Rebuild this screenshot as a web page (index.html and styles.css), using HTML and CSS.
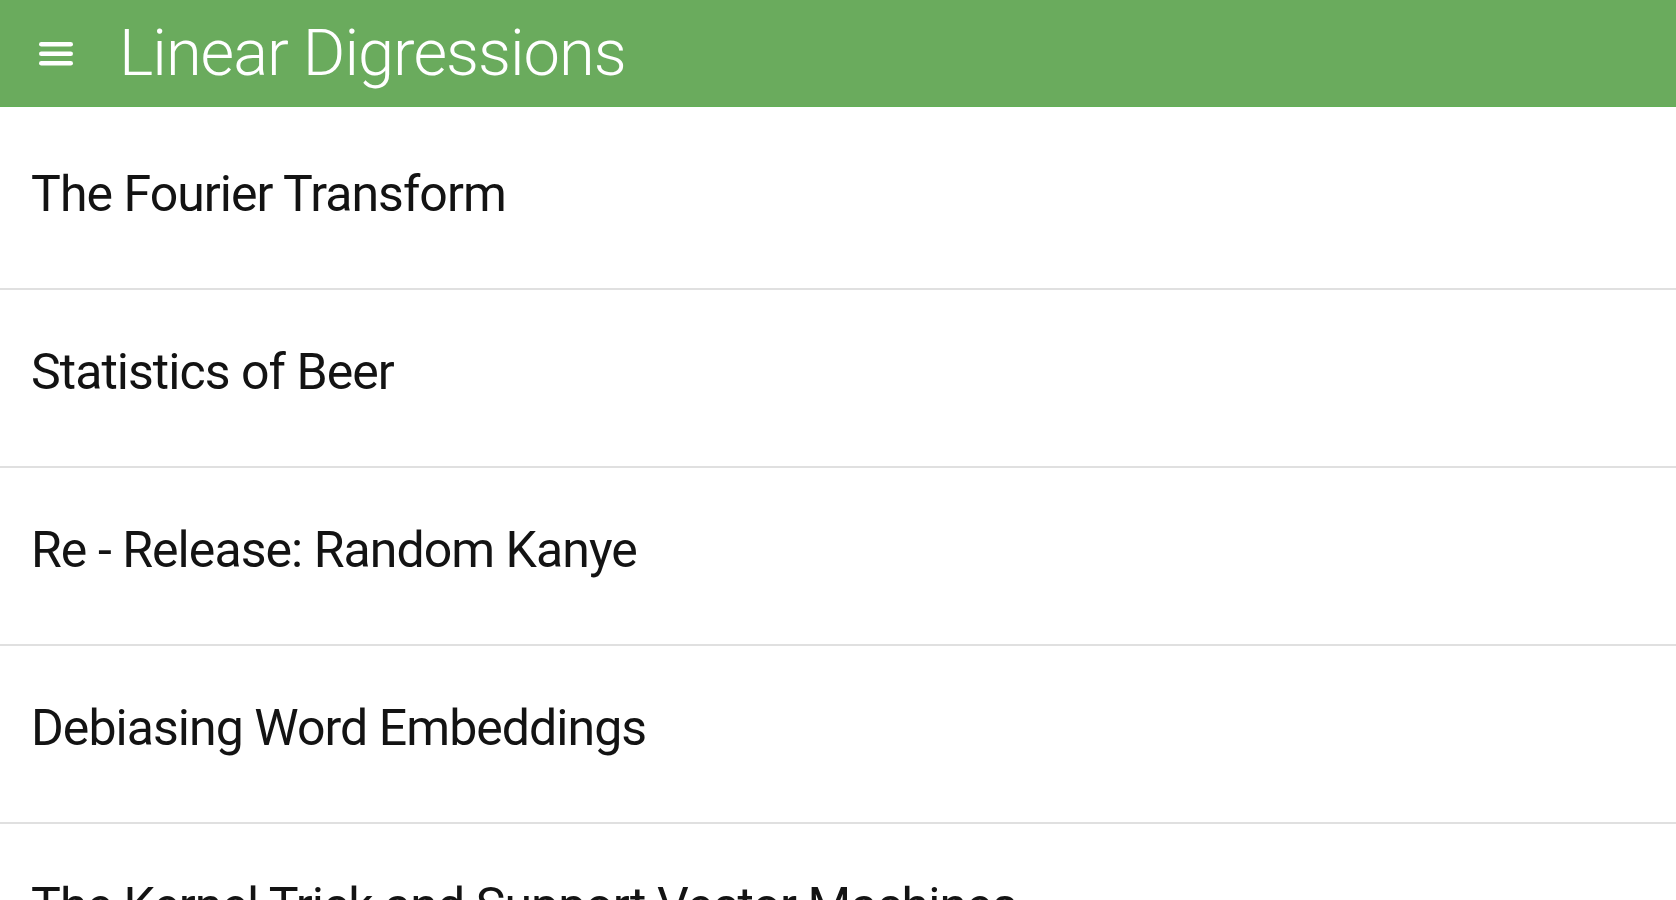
FILE: index.html
```html
<!DOCTYPE html>
<html lang="en">
<head>
<meta charset="utf-8">
<title>Linear Digressions</title>
<link rel="stylesheet" href="styles.css">
</head>
<body>
<header class="app-bar">
  <button class="menu-btn" aria-label="Menu">
    <svg width="34" height="24" viewBox="0 0 34 24">
      <rect x="0" y="0" width="34" height="4.6" rx="2.3" fill="#fff"/>
      <rect x="0" y="9.5" width="34" height="4.6" rx="2.3" fill="#fff"/>
      <rect x="0" y="19" width="34" height="4.6" rx="2.3" fill="#fff"/>
    </svg>
  </button>
  <h1 class="title">Linear Digressions</h1>
</header>
<ul class="episodes">
  <li class="episode">The Fourier Transform</li>
  <li class="episode">Statistics of Beer</li>
  <li class="episode">Re - Release: Random Kanye</li>
  <li class="episode">Debiasing Word Embeddings</li>
  <li class="episode">The Kernel Trick and Support Vector Machines</li>
</ul>
</body>
</html>
```
FILE: styles.css
```css
html, body {
  margin: 0;
  padding: 0;
  background: #fff;
  overflow: hidden;
  font-family: Roboto, "Liberation Sans", sans-serif;
}

.app-bar {
  height: 106px;
  background: #6aab5d;
  border-bottom: 1px solid #62b057;
  display: flex;
  align-items: center;
  box-sizing: content-box;
}

.menu-btn {
  background: none;
  border: 0;
  padding: 0;
  margin: 1px 0 0 39px;
  width: 34px;
  height: 24px;
  display: flex;
}

.title {
  margin: 0 0 0 46px;
  font-weight: 300;
  font-size: 65px;
  line-height: 66px;
  color: #fff;
  letter-spacing: -1px;
}

.episodes {
  list-style: none;
  margin: 0;
  padding: 5px 0 0;
}

.episode {
  height: 176px;
  box-sizing: content-box;
  padding: 0 0 0 31px;
  border-bottom: 2px solid #e0e0e0;
  font-size: 50px;
  line-height: 60px;
  color: #131313;
  letter-spacing: -0.95px;
}

.episode::before {
  content: "";
  display: block;
  height: 52px;
}
```
